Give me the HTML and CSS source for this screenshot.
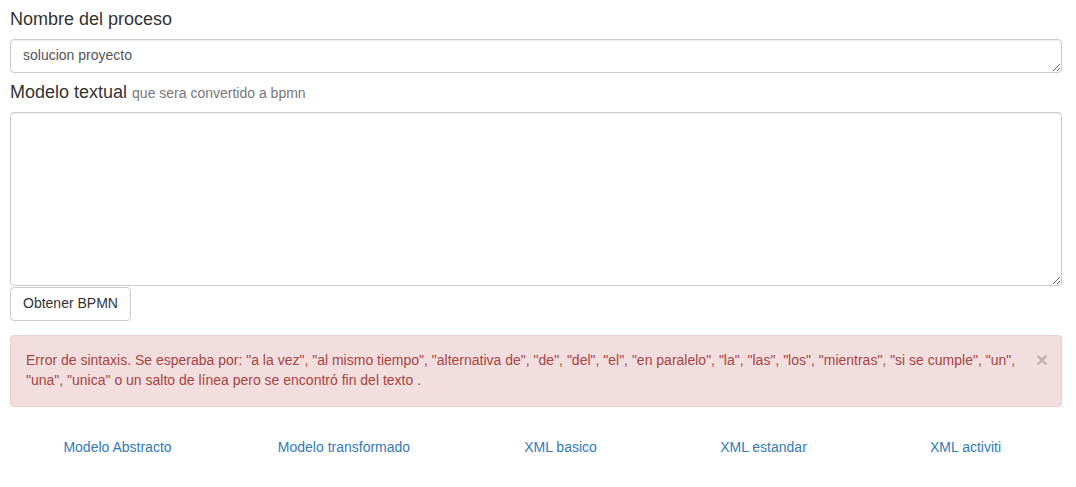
FILE: index.html
```html
<!DOCTYPE html>
<html lang="es">
<head>
<meta charset="utf-8">
<title>Proceso</title>
<link rel="stylesheet" href="styles.css">
</head>
<body>
<div class="page">
  <h4 class="title">Nombre del proceso</h4>
  <textarea class="field field-name" rows="1">solucion proyecto</textarea>
  <h4 class="title title-model">Modelo textual <small class="sub">que sera convertido a bpmn</small></h4>
  <textarea class="field field-model"></textarea>
  <div class="actions"><button class="btn" type="button">Obtener BPMN</button></div>
  <div class="alert">
    <span class="close">&times;</span>
    Error de sintaxis. Se esperaba por: "a la vez", "al mismo tiempo", "alternativa de", "de", "del", "el", "en paralelo", "la", "las", "los", "mientras", "si se cumple", "un", "una", "unica" o un salto de línea pero se encontró fin del texto .
  </div>
  <ul class="tabs">
    <li><a href="#">Modelo Abstracto</a></li>
    <li><a href="#">Modelo transformado</a></li>
    <li><a href="#">XML basico</a></li>
    <li><a href="#">XML estandar</a></li>
    <li><a href="#">XML activiti</a></li>
  </ul>
</div>
</body>
</html>
```
FILE: styles.css
```css
* { box-sizing: border-box; }
html, body {
  margin: 0;
  padding: 0;
  background: #fff;
}
body {
  font-family: "Liberation Sans", Arial, Helvetica, sans-serif;
  font-size: 14px;
  line-height: 1.42857;
  color: #333;
}
.page {
  padding: 0 14px 0 10px;
}
.title {
  margin: 10px 0;
  font-size: 18px;
  font-weight: 500;
  line-height: 19px;
  color: #333;
}
.title-model {
  margin-bottom: 9px;
}
.sub {
  font-size: 14px;
  font-weight: 400;
  color: #777;
}
.field {
  display: block;
  width: 100%;
  padding: 6px 12px;
  font-family: inherit;
  font-size: 14px;
  line-height: 1.42857;
  color: #555;
  background: #fff;
  border: 1px solid #ccc;
  border-radius: 4px;
  box-shadow: inset 0 1px 1px rgba(0,0,0,.075);
  margin: 0;
  resize: vertical;
  outline: none;
}
.field-name { height: 34px; }
.field-model { height: 174px; }
.actions {
  margin-top: 1px;
}
.btn {
  display: inline-block;
  padding: 6px 12px;
  font-family: inherit;
  font-size: 14px;
  line-height: 1.42857;
  color: #333;
  background: #fff;
  border: 1px solid #ccc;
  border-radius: 4px;
  cursor: pointer;
  margin: 0;
}
.alert {
  position: relative;
  margin: 14px 0 21px;
  padding: 15px 35px 15px 15px;
  border: 1px solid #ebccd1;
  border-radius: 4px;
  background: #f2dede;
  color: #a94442;
}
.close {
  position: absolute;
  top: 13px;
  right: 13px;
  font-size: 21px;
  font-weight: 700;
  line-height: 1;
  color: #000;
  opacity: .2;
  text-shadow: 0 1px 0 #fff;
}
.tabs {
  list-style: none;
  margin: 0;
  padding: 0;
  display: grid;
  grid-template-columns: 215fr 238fr 195fr 211fr 193fr;
}
.tabs li {
  text-align: center;
}
.tabs a {
  display: block;
  padding: 10px 15px;
  color: #337ab7;
  text-decoration: none;
}
```
